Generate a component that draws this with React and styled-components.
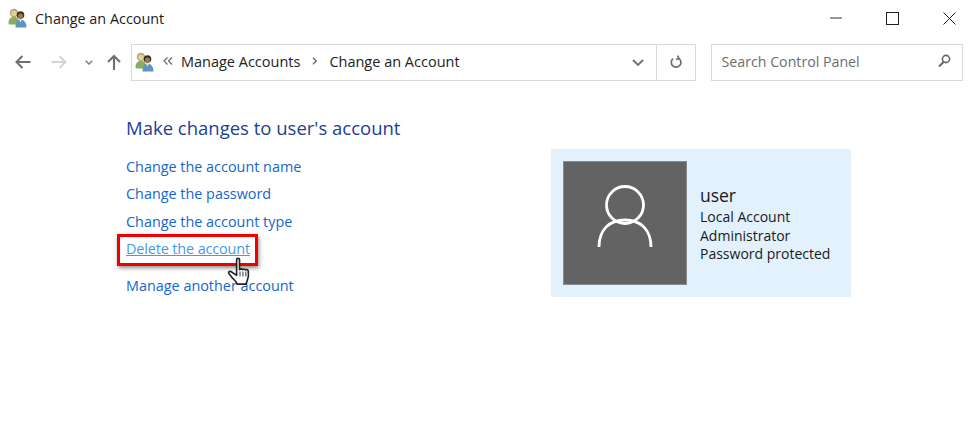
import React from "react";
import styled, { createGlobalStyle } from "styled-components";

const Global = createGlobalStyle`
  html, body { margin: 0; padding: 0; background: #fff; }
  body { font-family: "Open Sans", "Noto Sans", sans-serif; }
`;
const Page = styled.div`
  width: 976px; height: 434px; overflow: hidden; background: #fff; display: flex; flex-direction: column;
`;
const TitleBar = styled.header`
  height: 36px; display: flex; align-items: center; padding-left: 8px; gap: 7px;
`;
const WindowTitle = styled.span`
  font-size: 14.4px; color: #1b1b1b; flex: 1;
`;
const WindowButtons = styled.div`display: flex; align-items: center; gap: 44px; padding-right: 20px;`;
const WindowButton = styled.span`
  width: 13px; height: 36px; display: flex; align-items: center; justify-content: center;
`;
const NavBar = styled.nav`
  height: 38px; margin-top: 7px; display: flex; align-items: center; padding-left: 13px; padding-right: 13px;
`;
const NavButton = styled.span`
  width: ${p => p.$w}px; margin-left: ${p => p.$ml || 0}px;
  display: flex; align-items: center; justify-content: center; height: 36px;
`;
const AddressBox = styled.div`
  width: 566px; height: 37px; box-sizing: border-box; border: 1px solid #d9d9d9; margin-left: 9px;
  display: flex; align-items: center; padding-left: 3px;
`;
const Crumbs = styled.div`
  flex: 1; display: flex; align-items: center; font-size: 14.5px; color: #222;
  span { padding-bottom: 2px; }
`;
const CrumbSep = styled.span`
  display: flex; align-items: center; justify-content: center; width: ${p => p.$w}px;
`;
const AddressIconBtn = styled.span`
  width: ${p => p.$w}px; height: 35px; display: flex; align-items: center; justify-content: center;
  border-left: ${p => (p.$sep ? "1px solid #d9d9d9" : "none")};
`;
const SearchBox = styled.div`
  width: 253px; height: 37px; box-sizing: border-box; border: 1px solid #d9d9d9; margin-left: 15px;
  display: flex; align-items: center; justify-content: space-between; padding: 0 11px 2px 10px;
  font-size: 14.2px; color: #6d6d6d;
`;
const Content = styled.main`
  display: flex; padding-left: 126px; margin-top: 34px; align-items: flex-start;
`;
const Tasks = styled.section`
  width: 425px; display: flex; flex-direction: column;
`;
const Heading = styled.h1`
  margin: 0 0 13px; font-size: 18.5px; font-weight: 400; line-height: 25px; color: #1c3f94;
`;
const LinkList = styled.div`display: flex; flex-direction: column;`;
const TaskLink = styled.a`
  position: relative; height: 27.4px; line-height: 27px; font-size: 14.4px;
  letter-spacing: ${p => (p.$hover ? "-0.12px" : "0")};
  color: ${p => (p.$hover ? "#3f9bf2" : "#1566cc")};
  text-decoration: none; align-self: flex-start;
  margin-top: ${p => p.$mt || 0}px;
  span { text-decoration: ${p => (p.$hover ? "underline" : "none")}; }
`;
const Highlight = styled.span`
  position: absolute; left: -9px; top: -1px; width: 141px; height: 32px; box-sizing: border-box;
  border: 3px solid #f00000; box-shadow: 1px 2px 4px rgba(0,0,0,.45); pointer-events: none;
`;
const HandCursor = styled.svg`
  position: absolute; left: 101px; top: 22px; width: 26px; height: 31px; z-index: 2;
`;
const Card = styled.aside`
  width: 300px; height: 148px; box-sizing: border-box; padding: 12px; margin-top: 34px;
  background: #e3f1fc; display: flex; align-items: center; gap: 13px;
`;
const Avatar = styled.div`
  width: 124px; height: 124px; background: #636363; flex: none; box-shadow: inset 0 0 0 1px #8a8a8a;
  display: flex; align-items: center; justify-content: center;
`;
const AvatarGlyph = styled.svg`
  width: 56px; height: 64px; margin-bottom: 12px;
`;
const Info = styled.div`
  display: flex; flex-direction: column; color: #1a1a1a; font-size: 14px; line-height: 18.5px; margin-top: 1px;
`;
const UserName = styled.div`font-size: 17.6px; line-height: 25px; letter-spacing: -0.1px;`;

const UsersIcon = ({ s = 20 }) => (
  <svg width={s} height={s} viewBox="0 0 20 20">
    <circle cx="6" cy="5" r="4.200" fill="#b9a268" />
    <circle cx="6" cy="5.200" r="2.800" fill="#e6cda6" />
    <path d="M.5 15.500C.5 11 2.500 9 6 9s5 2 5 6l-1 1.500H1.500z" fill="#84b060" />
    <circle cx="12.500" cy="7" r="3.800" fill="#3a3026" />
    <circle cx="12.500" cy="8" r="2.500" fill="#a5754f" />
    <path d="M7.500 19.500c0-5 1.500-8 5-8s6 3 6 8z" fill="#5f93c0" />
    <path d="M11 11.500h3l-1.500 3z" fill="#e4edf5" />
  </svg>
);

export default function App() {
  return (
    <Page>
      <Global />
      <TitleBar>
        <UsersIcon />
        <WindowTitle>Change an Account</WindowTitle>
        <WindowButtons>
          <WindowButton>
            <svg width="12" height="2" viewBox="0 0 12 2"><path d="M0 1h12" stroke="#333" strokeWidth="1" /></svg>
          </WindowButton>
          <WindowButton>
            <svg width="13" height="13" viewBox="0 0 13 13"><rect x=".5" y=".5" width="12" height="12" fill="none" stroke="#222" /></svg>
          </WindowButton>
          <WindowButton>
            <svg width="13" height="13" viewBox="0 0 13 13"><path d="M.5.500l12 12M12.500.500l-12 12" stroke="#222" fill="none" /></svg>
          </WindowButton>
        </WindowButtons>
      </TitleBar>
      <NavBar>
        <NavButton $w={20}>
          <svg width="16" height="14" viewBox="0 0 16 14"><path d="M15.500 7H1.500M7.500 1l-6 6 6 6" fill="none" stroke="#707070" strokeWidth="2.100" /></svg>
        </NavButton>
        <NavButton $w={16} $ml={18}>
          <svg width="16" height="14" viewBox="0 0 16 14"><path d="M.5 7h14M8.500 1l6 6-6 6" fill="none" stroke="#d4d4d4" strokeWidth="2" /></svg>
        </NavButton>
        <NavButton $w={10} $ml={17}>
          <svg width="8" height="5" viewBox="0 0 8 5"><path d="M.7.7L4 4 7.300.7" fill="none" stroke="#808080" strokeWidth="1.500" /></svg>
        </NavButton>
        <NavButton $w={16} $ml={12}>
          <svg width="14" height="16" viewBox="0 0 14 16"><path d="M7 16V2M1 8l6-6 6 6" fill="none" stroke="#707070" strokeWidth="2.100" /></svg>
        </NavButton>
        <AddressBox>
          <Crumbs>
            <UsersIcon />
            <CrumbSep $w={26}>
              <svg width="10" height="8" viewBox="0 0 10 8"><path d="M4.500.5L1 4l3.500 3.500M9 .5L5.500 4 9 7.500" fill="none" stroke="#666" strokeWidth="1.200" /></svg>
            </CrumbSep>
            <span>Manage Accounts</span>
            <CrumbSep $w={29}>
              <svg width="5" height="8" viewBox="0 0 5 8"><path d="M1 .7L4.300 4 1 7.300" fill="none" stroke="#666" strokeWidth="1.300" /></svg>
            </CrumbSep>
            <span>Change an Account</span>
          </Crumbs>
          <AddressIconBtn $w={36}>
            <svg width="12" height="7" viewBox="0 0 12 7"><path d="M1 1l5 5 5-5" fill="none" stroke="#6f6f6f" strokeWidth="1.800" /></svg>
          </AddressIconBtn>
          <AddressIconBtn $w={38} $sep>
            <svg width="12" height="14" viewBox="0 0 12 14"><path d="M3 3.700A4.800 4.800 0 1 0 8.500 3.200M7.700.6L8.900 3.300 6 4.500" fill="none" stroke="#707070" strokeWidth="1.700" /></svg>
          </AddressIconBtn>
        </AddressBox>
        <SearchBox>
          <span>Search Control Panel</span>
          <svg width="13" height="14" viewBox="0 0 13 14"><circle cx="8" cy="5" r="3.600" fill="none" stroke="#666" strokeWidth="1.600" /><path d="M5.500 8L1 12.500" stroke="#666" strokeWidth="2" /></svg>
        </SearchBox>
      </NavBar>
      <Content>
        <Tasks>
          <Heading>Make changes to user's account</Heading>
          <LinkList>
            <TaskLink><span>Change the account name</span></TaskLink>
            <TaskLink><span>Change the password</span></TaskLink>
            <TaskLink><span>Change the account type</span></TaskLink>
            <TaskLink $hover>
              <span>Delete the account</span>
              <Highlight />
              <HandCursor viewBox="0 0 26 32">
                <path d="M9.500 2.500c0-1.500 3-1.500 3 0V13c1-1 2.500-1 3 0 1-1 2.500-.8 3 .3 1-.8 2.800-.3 3 1 .5 3 .3 7-1 10-.6 1.500-1 2.500-1 3.700H10c-.5-2.500-2.500-4-5-6.500L1.500 17c-1-1.800 1.500-3 2.800-1.500l5.200 3.500z" fill="#fff" stroke="#222" strokeWidth="1.700" strokeLinejoin="round" />
                <path d="M13 15v5M16 15v5M19 15v5" stroke="#444" strokeWidth="1.100" />
              </HandCursor>
            </TaskLink>
            <TaskLink $mt={9}><span>Manage another account</span></TaskLink>
          </LinkList>
        </Tasks>
        <Card>
          <Avatar>
            <AvatarGlyph viewBox="0 0 56 64">
              <circle cx="28" cy="20" r="18.500" fill="none" stroke="#fff" strokeWidth="2.800" />
              <path d="M2 62c0-17 10-27 26-27s26 10 26 27" fill="none" stroke="#fff" strokeWidth="2.800" />
            </AvatarGlyph>
          </Avatar>
          <Info>
            <UserName>user</UserName>
            <div>Local Account</div>
            <div>Administrator</div>
            <div>Password protected</div>
          </Info>
        </Card>
      </Content>
    </Page>
  );
}
